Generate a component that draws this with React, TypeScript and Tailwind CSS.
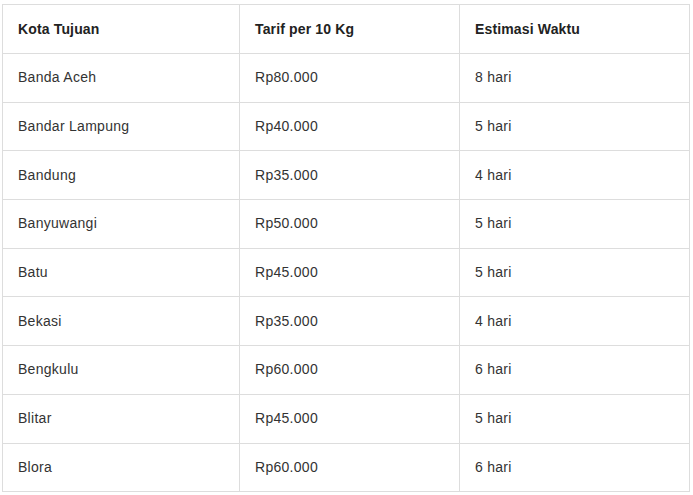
const ROWS = [
  { kota: "Banda Aceh", tarif: "Rp80.000", waktu: "8 hari" },
  { kota: "Bandar Lampung", tarif: "Rp40.000", waktu: "5 hari" },
  { kota: "Bandung", tarif: "Rp35.000", waktu: "4 hari" },
  { kota: "Banyuwangi", tarif: "Rp50.000", waktu: "5 hari" },
  { kota: "Batu", tarif: "Rp45.000", waktu: "5 hari" },
  { kota: "Bekasi", tarif: "Rp35.000", waktu: "4 hari" },
  { kota: "Bengkulu", tarif: "Rp60.000", waktu: "6 hari" },
  { kota: "Blitar", tarif: "Rp45.000", waktu: "5 hari" },
  { kota: "Blora", tarif: "Rp60.000", waktu: "6 hari" },
];

// ─── Tarif Table ─────────────────────────────────────────────────────────────

export default function App() {
  return (
    <div className="min-h-screen bg-white pt-1 pl-[2px] font-['Liberation_Sans',Arial,sans-serif] text-[14px] text-[#333]">
      <table className="w-[687px] table-fixed border-collapse">
        <colgroup>
          <col className="w-[237px]" />
          <col className="w-[220px]" />
          <col className="w-[230px]" />
        </colgroup>
        <thead>
          <tr className="h-[49px]">
            <th className="border border-[#ddd] pl-[15px] text-left align-middle font-bold tracking-[0.15px] text-[#222]">
              Kota Tujuan
            </th>
            <th className="border border-[#ddd] pl-[15px] text-left align-middle font-bold tracking-[0.15px] text-[#222]">
              Tarif per 10 Kg
            </th>
            <th className="border border-[#ddd] pl-[15px] text-left align-middle font-bold tracking-[0.15px] text-[#222]">
              Estimasi Waktu
            </th>
          </tr>
        </thead>
        <tbody>
          {ROWS.map((r) => (
            <tr key={r.kota} className="h-[48.7px]">
              <td className="border border-[#ddd] pl-[15px] align-middle tracking-[0.28px]">{r.kota}</td>
              <td className="border border-[#ddd] pl-[15px] align-middle tracking-[0.28px]">{r.tarif}</td>
              <td className="border border-[#ddd] pl-[15px] align-middle tracking-[0.28px]">{r.waktu}</td>
            </tr>
          ))}
        </tbody>
      </table>
    </div>
  );
}
